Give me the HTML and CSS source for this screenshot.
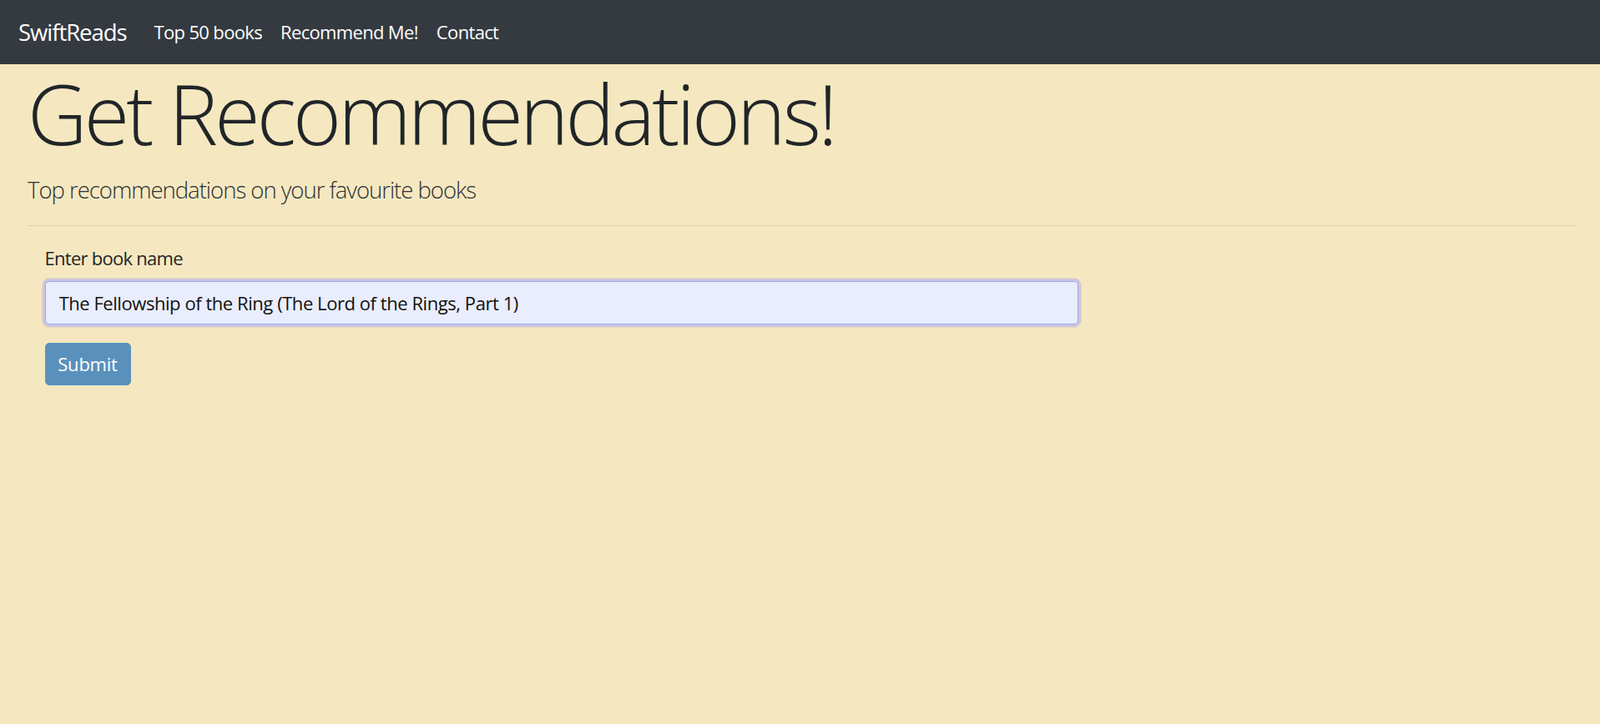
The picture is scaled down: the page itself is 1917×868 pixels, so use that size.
FILE: index.html
```html
<!DOCTYPE html>
<html lang="en">
<head>
<meta charset="utf-8">
<title>SwiftReads</title>
<link rel="stylesheet" href="styles.css">
</head>
<body>
<nav class="navbar">
  <a class="brand" href="#">SwiftReads</a>
  <ul class="nav">
    <li><a class="nav-link" href="#">Top 50 books</a></li>
    <li><a class="nav-link" href="#">Recommend Me!</a></li>
    <li><a class="nav-link" href="#">Contact</a></li>
  </ul>
</nav>
<main class="page">
  <h1 class="display">Get Recommendations!</h1>
  <p class="lead">Top recommendations on your favourite books</p>
  <hr class="divider">
  <form class="form">
    <div class="form-group">
      <label class="label" for="book">Enter book name</label>
      <input class="input" id="book" type="text" value="The Fellowship of the Ring (The Lord of the Rings, Part 1)">
    </div>
    <button class="btn" type="button">Submit</button>
  </form>
</main>
</body>
</html>
```

FILE: styles.css
```css
* { box-sizing: border-box; }
html, body { margin: 0; padding: 0; }
body {
  background: #f5e8c0;
  color: #212529;
  font-family: "Open Sans", "Noto Sans", sans-serif;
  font-size: 22px;
  line-height: 1.5;
  letter-spacing: -0.03em;
  min-height: 868px;
}
.navbar {
  display: flex;
  align-items: center;
  height: 77px;
  padding: 0 22px;
  background: #343a40;
}
.brand {
  color: #fff;
  text-decoration: none;
  font-size: 27.5px;
  line-height: 41px;
  margin-right: 22px;
  letter-spacing: -0.038em;
}
.nav {
  display: flex;
  list-style: none;
  margin: 0;
  padding: 0;
}
.nav-link {
  display: block;
  color: #fff;
  text-decoration: none;
  padding: 11px;
  font-size: 22px;
  line-height: 33px;
}
.page {
  padding: 0 30px 0 33px;
}
.display {
  margin: 0 0 11px 0;
  font-size: 99px;
  font-weight: 300;
  line-height: 1.2;
  letter-spacing: -0.039em;
}
.lead {
  margin: 0;
  font-size: 27.5px;
  font-weight: 300;
  line-height: 41px;
  color: #2c3136;
  letter-spacing: -0.037em;
}
.divider {
  margin: 22px 0;
  border: 0;
  border-top: 1.5px solid #dccfac;
}
.form {
  padding: 0 20.5px;
}
.form-group {
  margin-bottom: 22px;
}
.label {
  display: block;
  margin-bottom: 11px;
  line-height: 33px;
  letter-spacing: -0.033em;
}
.input {
  display: block;
  width: 1238px;
  height: 52px;
  padding: 0 16px;
  font: inherit;
  letter-spacing: -0.02em;
  color: #111;
  background: #e9edfd;
  border: 1.5px solid #8eaaf4;
  border-radius: 5px;
  box-shadow: 0 0 0 3.5px #d1c6d9;
  outline: none;
}
.btn {
  display: block;
  width: 103px;
  height: 51px;
  padding: 0;
  font: inherit;
  letter-spacing: -0.01em;
  color: #fff;
  background: #5a91bc;
  border: 1px solid #5499c0;
  border-radius: 5px;
}
```
